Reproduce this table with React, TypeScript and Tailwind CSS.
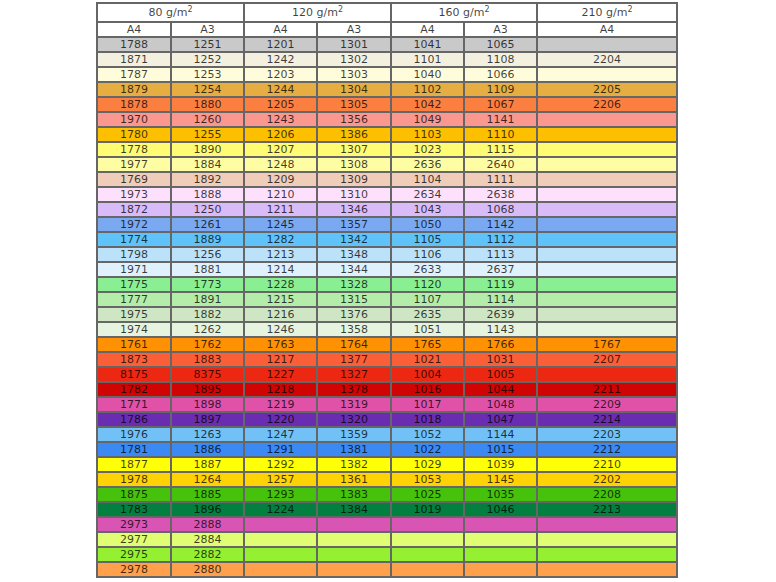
const rows: { bg: string; cells: string[] }[] = [
  { bg: 'bg-[#c9c9c9]', cells: ['1788', '1251', '1201', '1301', '1041', '1065', ''] },
  { bg: 'bg-[#f4f0e0]', cells: ['1871', '1252', '1242', '1302', '1101', '1108', '2204'] },
  { bg: 'bg-[#fffcdb]', cells: ['1787', '1253', '1203', '1303', '1040', '1066', ''] },
  { bg: 'bg-[#e6ae42]', cells: ['1879', '1254', '1244', '1304', '1102', '1109', '2205'] },
  { bg: 'bg-[#fb7f41]', cells: ['1878', '1880', '1205', '1305', '1042', '1067', '2206'] },
  { bg: 'bg-[#fa978f]', cells: ['1970', '1260', '1243', '1356', '1049', '1141', ''] },
  { bg: 'bg-[#fcc000]', cells: ['1780', '1255', '1206', '1386', '1103', '1110', ''] },
  { bg: 'bg-[#fffb73]', cells: ['1778', '1890', '1207', '1307', '1023', '1115', ''] },
  { bg: 'bg-[#fffda3]', cells: ['1977', '1884', '1248', '1308', '2636', '2640', ''] },
  { bg: 'bg-[#efcdb9]', cells: ['1769', '1892', '1209', '1309', '1104', '1111', ''] },
  { bg: 'bg-[#fde0fb]', cells: ['1973', '1888', '1210', '1310', '2634', '2638', ''] },
  { bg: 'bg-[#d9bbf9]', cells: ['1872', '1250', '1211', '1346', '1043', '1068', ''] },
  { bg: 'bg-[#7aa9f1]', cells: ['1972', '1261', '1245', '1357', '1050', '1142', ''] },
  { bg: 'bg-[#5fc2f8]', cells: ['1774', '1889', '1282', '1342', '1105', '1112', ''] },
  { bg: 'bg-[#bbe2f9]', cells: ['1798', '1256', '1213', '1348', '1106', '1113', ''] },
  { bg: 'bg-[#e0f1fe]', cells: ['1971', '1881', '1214', '1344', '2633', '2637', ''] },
  { bg: 'bg-[#8aef92]', cells: ['1775', '1773', '1228', '1328', '1120', '1119', ''] },
  { bg: 'bg-[#b3eda9]', cells: ['1777', '1891', '1215', '1315', '1107', '1114', ''] },
  { bg: 'bg-[#cee6c4]', cells: ['1975', '1882', '1216', '1376', '2635', '2639', ''] },
  { bg: 'bg-[#e6f3de]', cells: ['1974', '1262', '1246', '1358', '1051', '1143', ''] },
  { bg: 'bg-[#ff9204]', cells: ['1761', '1762', '1763', '1764', '1765', '1766', '1767'] },
  { bg: 'bg-[#fb5f38]', cells: ['1873', '1883', '1217', '1377', '1021', '1031', '2207'] },
  { bg: 'bg-[#ed2812]', cells: ['8175', '8375', '1227', '1327', '1004', '1005', ''] },
  { bg: 'bg-[#d10404]', cells: ['1782', '1895', '1218', '1378', '1016', '1044', '2211'] },
  { bg: 'bg-[#df52a8]', cells: ['1771', '1898', '1219', '1319', '1017', '1048', '2209'] },
  { bg: 'bg-[#6a2cb0]', cells: ['1786', '1897', '1220', '1320', '1018', '1047', '2214'] },
  { bg: 'bg-[#72c1f6]', cells: ['1976', '1263', '1247', '1359', '1052', '1144', '2203'] },
  { bg: 'bg-[#3b89f2]', cells: ['1781', '1886', '1291', '1381', '1022', '1015', '2212'] },
  { bg: 'bg-[#ffff08]', cells: ['1877', '1887', '1292', '1382', '1029', '1039', '2210'] },
  { bg: 'bg-[#ffd205]', cells: ['1978', '1264', '1257', '1361', '1053', '1145', '2202'] },
  { bg: 'bg-[#46c20c]', cells: ['1875', '1885', '1293', '1383', '1025', '1035', '2208'] },
  { bg: 'bg-[#037f3f]', cells: ['1783', '1896', '1224', '1384', '1019', '1046', '2213'] },
  { bg: 'bg-[#d955b4]', cells: ['2973', '2888', '', '', '', '', ''] },
  { bg: 'bg-[#e1fd73]', cells: ['2977', '2884', '', '', '', '', ''] },
  { bg: 'bg-[#95f032]', cells: ['2975', '2882', '', '', '', '', ''] },
  { bg: 'bg-[#fea04c]', cells: ['2978', '2880', '', '', '', '', ''] },
];

const weights = ['80', '120', '160'];

export default function App() {
  return (
    <div className="min-h-screen bg-white pt-[2px] pl-[96px] font-['DejaVu_Sans',Verdana,sans-serif] text-[11px] text-black/75">
      <table className="w-[580px] table-fixed border-collapse border-2 border-[#666]">
        <colgroup>
          <col className="w-[74px]" />
          <col className="w-[73px]" />
          <col className="w-[73px]" />
          <col className="w-[74px]" />
          <col className="w-[73px]" />
          <col className="w-[73px]" />
          <col className="w-[140px]" />
        </colgroup>
        <thead>
          <tr className="bg-white">
            {weights.map((w) => (
              <th key={w} colSpan={2} className="h-[17px] border-2 border-[#666] p-0 text-center font-normal leading-[17px]">
                {w} g/m<sup className="text-[8px] leading-none">2</sup>
              </th>
            ))}
            <th className="h-[17px] border-2 border-[#666] p-0 text-center font-normal leading-[17px]">
              210 g/m<sup className="text-[8px] leading-none">2</sup>
            </th>
          </tr>
          <tr className="bg-white">
            {['A4', 'A3', 'A4', 'A3', 'A4', 'A3', 'A4'].map((s, i) => (
              <th key={i} className="h-[13px] border-2 border-[#666] p-0 text-center font-normal leading-[13px]">
                {s}
              </th>
            ))}
          </tr>
        </thead>
        <tbody>
          {rows.map((row, r) => (
            <tr key={r} className={row.bg}>
              {row.cells.map((c, i) => (
                <td key={i} className="h-[13px] border-2 border-[#666] p-0 text-center leading-[13px]">
                  {c}
                </td>
              ))}
            </tr>
          ))}
        </tbody>
      </table>
    </div>
  );
}
